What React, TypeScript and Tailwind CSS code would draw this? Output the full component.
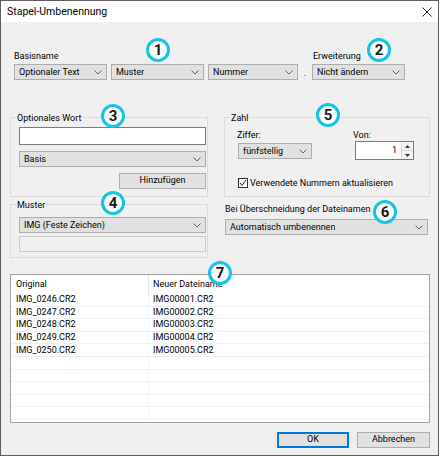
import React from 'react';

const rows = [
  ['IMG_0246.CR2', 'IMG00001.CR2'],
  ['IMG_0247.CR2', 'IMG00002.CR2'],
  ['IMG_0248.CR2', 'IMG00003.CR2'],
  ['IMG_0249.CR2', 'IMG00004.CR2'],
  ['IMG_0250.CR2', 'IMG00005.CR2'],
  ['', ''],
  ['', ''],
  ['', ''],
  ['', ''],
  ['', ''],
];

function Chevron() {
  return (
    <svg width="8" height="5" viewBox="0 0 8 5" className="shrink-0">
      <path d="M0.5 0.5 L4 4 L7.5 0.5" fill="none" stroke="#606060" strokeWidth="1" />
    </svg>
  );
}

function Combo({ label, className }: { label: string; className?: string }) {
  return (
    <div
      className={`flex h-[16px] items-center justify-between border border-[#adadad] bg-[#e1e1e1] pl-[4px] pr-[4px] ${className ?? ''}`}
    >
      <span className="truncate leading-none">{label}</span>
      <Chevron />
    </div>
  );
}

function Group({ title, className, children }: { title: string; className?: string; children?: React.ReactNode }) {
  return (
    <div className={`relative border border-[#dcdcdc] ${className ?? ''}`}>
      <span className="absolute left-[5px] top-[-6px] bg-[#f0f0f0] px-[1px] leading-[12px]">{title}</span>
      {children}
    </div>
  );
}

function Badge({ n, className }: { n: number; className: string }) {
  return (
    <div
      className={`absolute flex h-[24px] w-[24px] items-center justify-center rounded-full border-[3px] border-[#14c4e4] bg-white text-[15px] font-bold leading-none text-[#1a1a1a] ${className}`}
    >
      {n}
    </div>
  );
}

export default function App() {
  return (
    <div className="relative h-[457px] w-[440px] bg-white font-['Roboto','Liberation_Sans',sans-serif] text-[9px] text-black">
      <div className="flex h-[456px] w-[439px] flex-col border border-[#5d5d5d] bg-[#f0f0f0]">
        {/* title bar */}
        <div className="flex h-[21px] shrink-0 items-center justify-between bg-white pl-[6px] pr-[6px]">
          <span className="text-[10.5px]">Stapel-Umbenennung</span>
          <svg width="10" height="10" viewBox="0 0 10 10">
            <path d="M0.5 0.5 L9.5 9.5 M9.5 0.5 L0.5 9.5" stroke="#222" strokeWidth="1" />
          </svg>
        </div>

        <div className="flex flex-col pl-[9px] pr-[8px] pt-[28px]">
          {/* basisname row */}
          <div className="flex items-end pl-[4px]">
            <div className="flex flex-col">
              <span className="h-[14px] leading-[12px]">Basisname</span>
              <Combo label="Optionaler Text" className="w-[93px]" />
            </div>
            <Combo label="Muster" className="ml-[4px] w-[93px]" />
            <Combo label="Nummer" className="ml-[4px] w-[90px]" />
            <span className="flex h-[16px] w-[14px] items-end justify-center leading-[14px]">.</span>
            <div className="flex flex-col">
              <span className="h-[14px] pl-[1px] leading-[12px]">Erweiterung</span>
              <Combo label="Nicht ändern" className="w-[93px]" />
            </div>
          </div>

          {/* groups */}
          <div className="mt-[37px] flex items-start">
            <div className="flex w-[198px] flex-col">
              <Group title="Optionales Wort" className="h-[80px]">
                <div className="flex flex-col pl-[8px] pr-[1px] pt-[9px]">
                  <div className="h-[18px] border border-[#7a7a7a] bg-white" />
                  <Combo label="Basis" className="mt-[6px]" />
                  <div className="mt-[6px] flex h-[16px] w-[87px] items-center justify-center self-end border border-[#adadad] bg-[#e1e1e1]">
                    Hinzufügen
                  </div>
                </div>
              </Group>
              <Group title="Muster" className="mt-[7px] h-[54px]">
                <div className="flex flex-col pl-[8px] pr-[1px] pt-[12px]">
                  <Combo label="IMG (Feste Zeichen)" />
                  <div className="mt-[3px] h-[16px] border border-[#cccccc] bg-[#f0f0f0]" />
                </div>
              </Group>
            </div>

            <div className="ml-[16px] flex w-[206px] flex-col">
              <Group title="Zahl" className="h-[80px]">
                <div className="flex pt-[11px]">
                  <div className="flex w-[128px] flex-col pl-[12px]">
                    <span className="h-[14px] leading-[12px]">Ziffer:</span>
                    <Combo label="fünfstellig" className="ml-[1px] w-[74px]" />
                  </div>
                  <div className="flex flex-col">
                    <span className="h-[12px] leading-[12px]">Von:</span>
                    <div className="ml-[2px] flex h-[19px] w-[59px] border border-[#7a7a7a] bg-white">
                      <span className="flex flex-1 items-center justify-end pr-[4px]">1</span>
                      <div className="flex w-[12px] flex-col border-l border-[#dadada]">
                        <div className="flex flex-1 items-center justify-center border-b border-[#dadada] bg-[#f4f4f4]">
                          <svg width="5" height="3" viewBox="0 0 5 3">
                            <path d="M0 3 L2.5 0 L5 3 Z" fill="#333" />
                          </svg>
                        </div>
                        <div className="flex flex-1 items-center justify-center bg-[#f4f4f4]">
                          <svg width="5" height="3" viewBox="0 0 5 3">
                            <path d="M0 0 L2.5 3 L5 0 Z" fill="#333" />
                          </svg>
                        </div>
                      </div>
                    </div>
                  </div>
                </div>
                <div className="mt-[17px] flex items-center pl-[13px]">
                  <div className="flex h-[10px] w-[10px] items-center justify-center border border-[#333] bg-white">
                    <svg width="8" height="8" viewBox="0 0 8 8">
                      <path d="M1 4 L3 6.5 L7 1" fill="none" stroke="#222" strokeWidth="1" />
                    </svg>
                  </div>
                  <span className="ml-[2px] leading-[12px]">Verwendete Nummern aktualisieren</span>
                </div>
              </Group>
              <span className="ml-[1px] mt-[6px] h-[12px] leading-[12px]">Bei Überschneidung der Dateinamen</span>
              <Combo label="Automatisch umbenennen" className="ml-[1px] mt-[4px] w-[203px]" />
            </div>
          </div>

          {/* list view */}
          <div className="mt-[16px] flex h-[149px] w-[420px] flex-col overflow-hidden border border-[#a0a0a0] bg-white">
            <div className="flex h-[19px] shrink-0 items-center">
              <span className="flex h-full w-[138px] items-center border-r border-[#e5e5e5] pl-[5px]">Original</span>
              <span className="pl-[4px]">Neuer Dateiname</span>
            </div>
            {rows.map((r, i) => (
              <div key={i} className="flex h-[12.6px] shrink-0 items-center border-b border-[#f0f0f0]">
                <span className="flex h-full w-[138px] items-center border-r border-[#f3f3f3] pl-[5px] leading-none">{r[0]}</span>
                <span className="pl-[4px] leading-none">{r[1]}</span>
              </div>
            ))}
          </div>

          {/* buttons */}
          <div className="mt-[9px] flex justify-end gap-[8px]">
            <div className="flex h-[16px] w-[72px] items-center justify-center border border-[#0078d7] bg-[#e1e1e1] shadow-[inset_0_0_0_1px_#0078d7]">
              OK
            </div>
            <div className="flex h-[16px] w-[73px] items-center justify-center border border-[#adadad] bg-[#e1e1e1]">
              Abbrechen
            </div>
          </div>
        </div>
      </div>

      <Badge n={1} className="left-[146px] top-[38px]" />
      <Badge n={2} className="left-[367px] top-[38px]" />
      <Badge n={3} className="left-[101px] top-[104px]" />
      <Badge n={4} className="left-[101px] top-[191px]" />
      <Badge n={5} className="left-[316px] top-[103px]" />
      <Badge n={6} className="left-[373px] top-[200px]" />
      <Badge n={7} className="left-[208px] top-[261px]" />
    </div>
  );
}
